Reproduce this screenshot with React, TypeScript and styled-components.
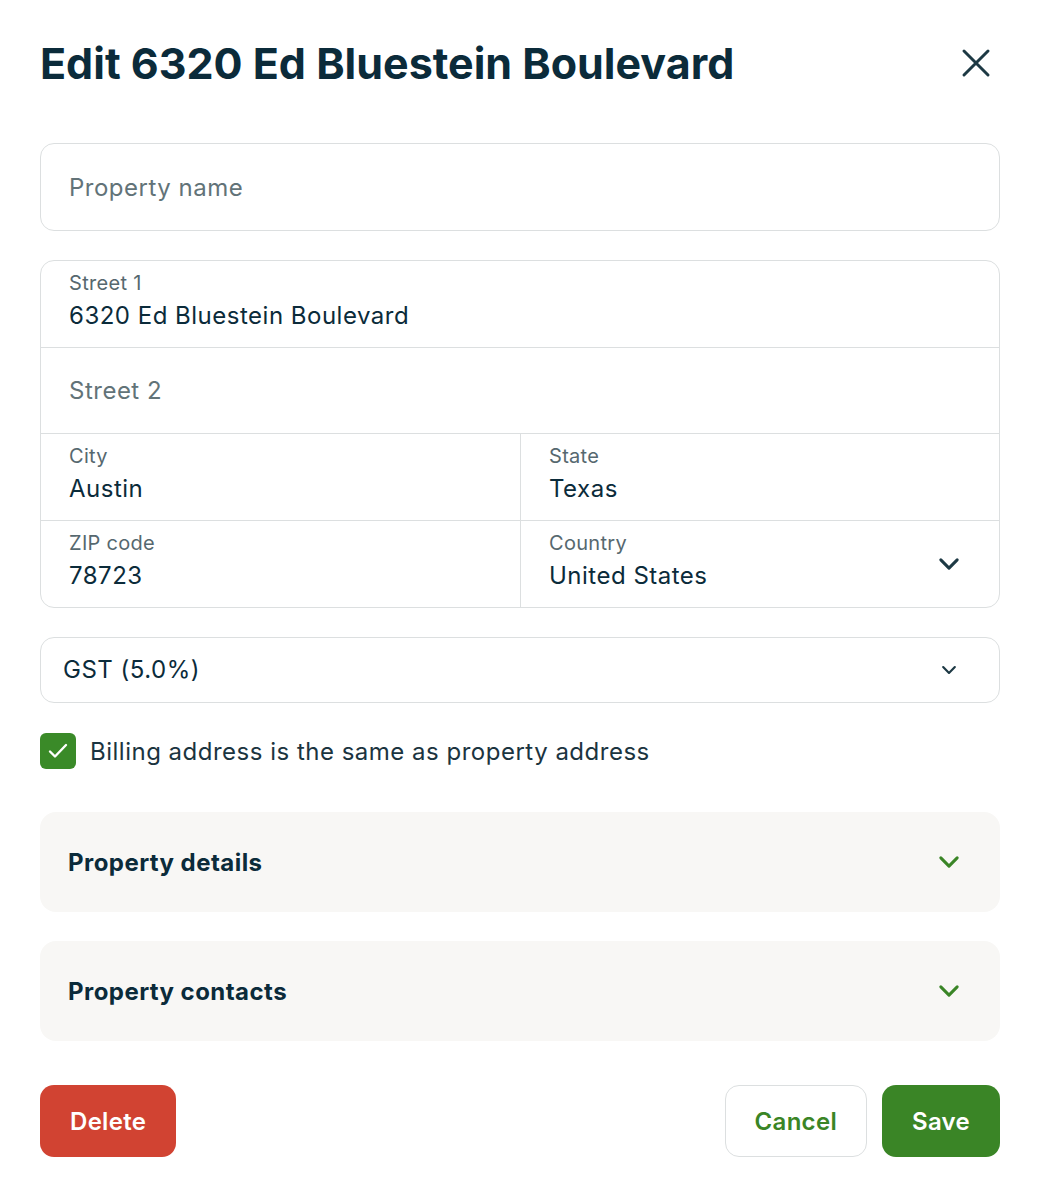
import React from "react";
import styled, { createGlobalStyle } from "styled-components";

const Global = createGlobalStyle`
  html, body { margin: 0; padding: 0; background: #ffffff; }
  body { font-family: Inter, "Noto Sans", Arial, sans-serif; color: #0b2b3a; }
  * { box-sizing: border-box; }
`;

const Page = styled.div`
  width: 960px;
  margin-left: 40px;
  padding-top: 35px;
  display: flex;
  flex-direction: column;
`;

const Header = styled.div`
  display: flex;
  align-items: center;
  justify-content: space-between;
  height: 56px;
  margin-bottom: 52px;
`;

const Title = styled.h1`
  margin: 0;
  font-size: 43px;
  font-weight: 700;
  letter-spacing: 0px;
  color: #0b2b3a;
`;

const CloseBtn = styled.button`
  width: 48px;
  height: 48px;
  border: none;
  background: none;
  padding: 0;
  display: flex;
  align-items: center;
  justify-content: center;
  cursor: pointer;
`;

const Box = styled.div`
  border: 1px solid #dcdfe0;
  border-radius: 14px;
  background: #fff;
`;

const Cell = styled.div<{ $right?: boolean; $top?: boolean; $stacked?: boolean; $tall?: boolean }>`
  height: ${(p) => (p.$tall ? 87 : 86)}px;
  padding: ${(p) => (p.$stacked ? "10px 36px 0 28px" : "0 36px 0 28px")};
  display: flex;
  align-items: ${(p) => (p.$stacked ? "flex-start" : "center")};
  justify-content: space-between;
  border-top: ${(p) => (p.$top ? "none" : "1px solid #dcdfe0")};
  border-left: ${(p) => (p.$right ? "1px solid #dcdfe0" : "none")};
`;

const CellText = styled.div`
  display: flex;
  flex-direction: column;
  gap: 6px;
`;

const Label = styled.span`
  font-size: 20px;
  color: #56686f;
  line-height: 24px;
  letter-spacing: 0.3px;
`;

const Value = styled.span`
  font-size: 24px;
  color: #0b2b3a;
  line-height: 30px;
  letter-spacing: 0.5px;
`;

const Placeholder = styled.span`
  font-size: 24px;
  color: #627378;
  letter-spacing: 0.5px;
`;

const Grid2 = styled.div`
  display: grid;
  grid-template-columns: 1fr 1fr;
`;

const ChevronSlot = styled.div`
  align-self: center;
  display: flex;
  margin-top: -10px;
`;

const Spacer = styled.div<{ $h: number }>`
  height: ${(p) => p.$h}px;
`;

const Select = styled(Box)`
  height: 66px;
  padding: 0 40px 0 22px;
  display: flex;
  align-items: center;
  justify-content: space-between;
`;

const CheckRow = styled.label`
  display: flex;
  align-items: center;
  gap: 14px;
  height: 36px;
  font-size: 24px;
  letter-spacing: 0.5px;
  color: #1b3440;
`;

const Check = styled.span`
  width: 36px;
  height: 36px;
  border-radius: 6px;
  background: #3a8a28;
  display: flex;
  align-items: center;
  justify-content: center;
`;

const Accordion = styled.div`
  height: 100px;
  border-radius: 16px;
  background: #f8f7f5;
  padding: 0 37px 0 28px;
  display: flex;
  align-items: center;
  justify-content: space-between;
`;

const AccTitle = styled.span`
  font-size: 24px;
  font-weight: 700;
  letter-spacing: 0.45px;
  color: #0b2b3a;
`;

const Footer = styled.div`
  display: flex;
  align-items: center;
  justify-content: space-between;
`;

const BtnGroup = styled.div`
  display: flex;
  gap: 15px;
`;

const Button = styled.button<{ $variant: "danger" | "primary" | "outline" }>`
  height: 72px;
  padding: 0 29px;
  border-radius: 14px;
  font-family: inherit;
  font-size: 24px;
  font-weight: 600;
  letter-spacing: 0.3px;
  cursor: pointer;
  border: 1px solid
    ${(p) => (p.$variant === "outline" ? "#dcdfe0" : "transparent")};
  background: ${(p) =>
    p.$variant === "danger" ? "#d14332" : p.$variant === "primary" ? "#3a8526" : "#fff"};
  color: ${(p) => (p.$variant === "outline" ? "#3a8526" : "#fff")};
`;

const Chevron = ({ color, size, sw }: { color: string; size: number; sw: number }) => (
  <svg width={size} height={size} viewBox="0 0 24 24" fill="none">
    <path d="M5 8.5l7 7 7-7" stroke={color} strokeWidth={sw} strokeLinecap="round" strokeLinejoin="round" />
  </svg>
);

export default function App() {
  return (
    <>
      <Global />
      <Page>
        <Header>
          <Title>Edit 6320 Ed Bluestein Boulevard</Title>
          <CloseBtn aria-label="Close">
            <svg width="30" height="30" viewBox="0 0 30 30" fill="none">
              <path d="M3 3l24 24M27 3L3 27" stroke="#1d3944" strokeWidth="3" strokeLinecap="round" />
            </svg>
          </CloseBtn>
        </Header>

        <Box>
          <Cell $top>
            <Placeholder>Property name</Placeholder>
          </Cell>
        </Box>

        <Spacer $h={29} />

        <Box>
          <Cell $top $stacked>
            <CellText>
              <Label>Street 1</Label>
              <Value>6320 Ed Bluestein Boulevard</Value>
            </CellText>
          </Cell>
          <Cell>
            <Placeholder>Street 2</Placeholder>
          </Cell>
          <Grid2>
            <Cell $stacked $tall>
              <CellText>
                <Label>City</Label>
                <Value>Austin</Value>
              </CellText>
            </Cell>
            <Cell $right $stacked $tall>
              <CellText>
                <Label>State</Label>
                <Value>Texas</Value>
              </CellText>
            </Cell>
            <Cell $stacked $tall>
              <CellText>
                <Label>ZIP code</Label>
                <Value>78723</Value>
              </CellText>
            </Cell>
            <Cell $right $stacked $tall>
              <CellText>
                <Label>Country</Label>
                <Value>United States</Value>
              </CellText>
              <ChevronSlot>
                <Chevron color="#1d3944" size={28} sw={2.6} />
              </ChevronSlot>
            </Cell>
          </Grid2>
        </Box>

        <Spacer $h={29} />

        <Select>
          <Value>GST (5.0%)</Value>
          <Chevron color="#1d3944" size={20} sw={2.6} />
        </Select>

        <Spacer $h={30} />

        <CheckRow>
          <Check>
            <svg width="24" height="24" viewBox="0 0 24 24" fill="none">
              <path d="M4 12.5l5 5L20 6" stroke="#fff" strokeWidth="2.4" strokeLinecap="round" strokeLinejoin="round" />
            </svg>
          </Check>
          Billing address is the same as property address
        </CheckRow>

        <Spacer $h={43} />

        <Accordion>
          <AccTitle>Property details</AccTitle>
          <Chevron color="#3a8526" size={28} sw={2.6} />
        </Accordion>

        <Spacer $h={29} />

        <Accordion>
          <AccTitle>Property contacts</AccTitle>
          <Chevron color="#3a8526" size={28} sw={2.6} />
        </Accordion>

        <Spacer $h={44} />

        <Footer>
          <Button $variant="danger">Delete</Button>
          <BtnGroup>
            <Button $variant="outline">Cancel</Button>
            <Button $variant="primary">Save</Button>
          </BtnGroup>
        </Footer>
      </Page>
    </>
  );
}
